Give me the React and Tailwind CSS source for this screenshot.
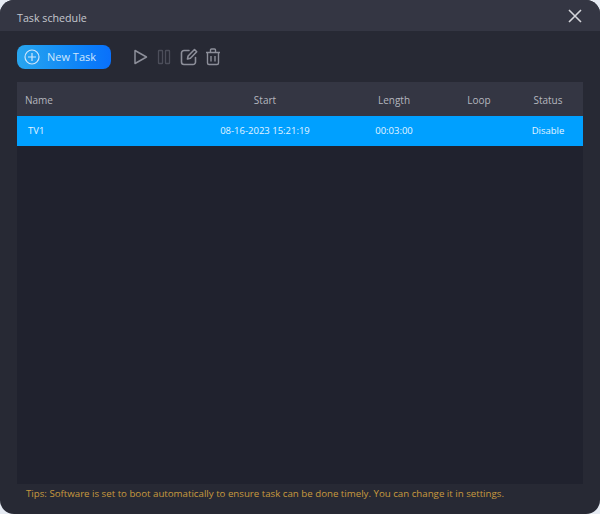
import React from 'react';

const columns = 'grid grid-cols-[170px_156px_102px_68px_70px] items-center';

const App = () => {
  return (
    <div className="w-[600px] h-[514px] bg-[#e6ebf3] overflow-hidden" style={{ fontFamily: '"Open Sans", "Noto Sans", sans-serif' }}>
      <div className="w-full h-full flex flex-col rounded-[14px] overflow-hidden bg-[#272934]">
        <div className="h-[31px] shrink-0 flex items-center justify-between pl-[17px] pr-[17px] bg-[#343643]">
          <span className="text-[10.7px] text-[#c5c7ce] pt-[5px]">Task schedule</span>
          <svg className="w-[16px] h-[16px] text-[#d4d5da]" viewBox="0 0 16 16" fill="none" stroke="currentColor" strokeWidth="1.6">
            <path d="M2 2l12 12M14 2L2 14" />
          </svg>
        </div>

        <div className="h-[51px] shrink-0 flex items-center px-[17px] pt-[1px]">
          <button className="w-[94px] h-[24px] rounded-[8px] flex items-center pl-[7px] gap-[7px] bg-gradient-to-r from-[#29a5ee] to-[#0a70fb] text-[11px] text-[#cfe6fb]">
            <svg className="w-[16px] h-[16px]" viewBox="0 0 16 16" fill="none" stroke="currentColor" strokeWidth="1.2">
              <circle cx="8" cy="8" r="7" />
              <path d="M8 4v8M4 8h8" />
            </svg>
            New Task
          </button>
          <div className="flex items-center ml-[22px] text-[#8d8f9a]">
            <svg className="w-[16px] h-[18px]" viewBox="0 0 16 18" fill="none" stroke="currentColor" strokeWidth="1.5" strokeLinejoin="round">
              <path d="M2 2.5v13l11.5-6.5z" />
            </svg>
            <svg className="w-[16px] h-[16px] ml-[8px] text-[#4c4e5a]" viewBox="0 0 16 16" fill="none" stroke="currentColor" strokeWidth="1.3">
              <rect x="1.5" y="1.5" width="4" height="13" rx="0.6" />
              <rect x="8.5" y="1.5" width="4" height="13" rx="0.6" />
            </svg>
            <svg className="w-[18px] h-[18px] ml-[7px]" viewBox="0 0 18 18" fill="none" stroke="currentColor" strokeWidth="1.6" strokeLinecap="round" strokeLinejoin="round">
              <path d="M9 2.5H4a2.5 2.5 0 0 0-2.5 2.5v9A2.5 2.5 0 0 0 4 16.5h9a2.5 2.5 0 0 0 2.5-2.5V9.5" />
              <path d="M7.5 11l.6-3L14.5 1.5l2.2 2.2-6.3 6.6z" />
            </svg>
            <svg className="w-[16px] h-[18px] ml-[7px]" viewBox="0 0 16 18" fill="none" stroke="currentColor" strokeWidth="1.4" strokeLinejoin="round">
              <path d="M1 4.5h14M5.5 4.5V2a1 1 0 0 1 1-1h3a1 1 0 0 1 1 1v2.5" />
              <path d="M2.5 4.5v10.5a1.5 1.5 0 0 0 1.5 1.5h8a1.5 1.5 0 0 0 1.5-1.5V4.5" />
              <path d="M6 8v5.5M10 8v5.5" />
            </svg>
          </div>
        </div>

        <div className="mx-[17px] h-[402px] shrink-0 flex flex-col bg-[#20222e]">
          <div className={`${columns} h-[34px] shrink-0 pt-[2px] bg-[#343643] text-[10px] text-[#b4b6bf]`}>
            <span className="pl-[8px]">Name</span>
            <span className="text-center">Start</span>
            <span className="text-center">Length</span>
            <span className="text-center">Loop</span>
            <span className="text-center">Status</span>
          </div>
          <div className={`${columns} h-[30px] shrink-0 pt-[1px] bg-[#00a0ff] text-[9.5px] text-[#e3f4ff]`}>
            <span className="pl-[11px]">TV1</span>
            <span className="text-center">08-16-2023 15:21:19</span>
            <span className="text-center">00:03:00</span>
            <span className="text-center"></span>
            <span className="text-center">Disable</span>
          </div>
        </div>

        <div className="flex-1 flex items-start pt-[3px] pl-[26px] text-[9.7px] text-[#c79a3e]">
          Tips: Software is set to boot automatically to ensure task can be done timely. You can change it in settings.
        </div>
      </div>
    </div>
  );
};

export default App;
